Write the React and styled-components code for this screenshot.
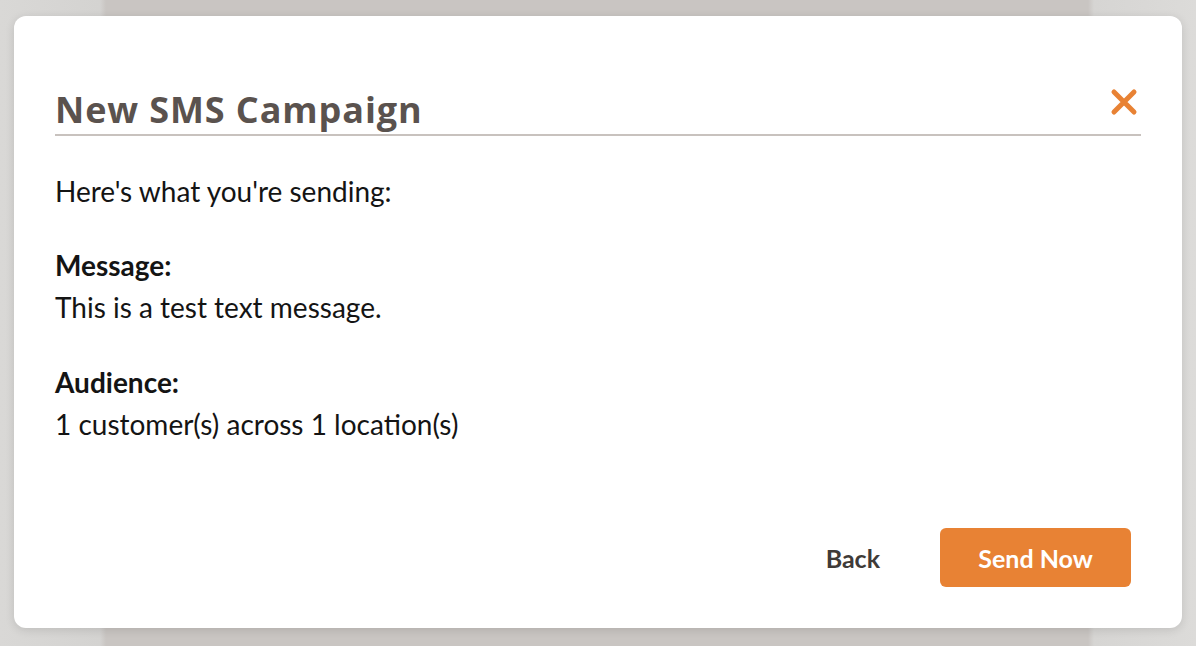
import React from 'react';
import styled, { createGlobalStyle } from 'styled-components';

const Global = createGlobalStyle`
html, body {
  margin: 0;
  padding: 0;
  width: 100%;
  height: 100%;
  overflow: hidden;
}
#root {
  height: 100%;
}
`

const Backdrop = styled.div`
width: 1196px;
height: 646px;
background: linear-gradient(90deg, #d9d8d6 0px, #d4d3d1 100px, #c9c5c2 106px, #c9c5c2 1088px, #d6d5d3 1094px, #dcdbd9 100%);
padding: 16px 14px 18px 14px;
box-sizing: border-box;
display: flex;
`

const Modal = styled.div`
flex: 1;
background-color: #ffffff;
border-radius: 12px;
box-shadow: 0 2px 10px rgba(0, 0, 0, 0.12);
padding: 71px 41px 41px 41px;
display: flex;
flex-direction: column;
`

const Header = styled.div`
display: flex;
align-items: flex-end;
justify-content: space-between;
border-bottom: 2px solid #c8c2be;
padding-bottom: 4px;
`

const Title = styled.h1`
margin: 0;
font-family: 'Open Sans', sans-serif;
font-weight: 700;
font-size: 36px;
line-height: 40px;
letter-spacing: 0.9px;
color: #5a524e;
`

const Close = styled.button`
border: none;
background: none;
padding: 0;
margin: 0 2px 13px 0;
width: 30px;
height: 30px;
display: flex;
align-items: center;
justify-content: center;
cursor: pointer;
`

const Body = styled.div`
flex: 1;
font-family: 'Lato', sans-serif;
font-size: 28px;
color: #141414;
padding-top: 38px;
`

const Intro = styled.p`
margin: 0 0 36px 0;
line-height: 34px;
`

const Section = styled.div`
margin-bottom: 33px;
`

const Label = styled.div`
font-weight: 700;
line-height: 42px;
`

const Value = styled.div`
line-height: 42px;
`

const Footer = styled.div`
display: flex;
justify-content: flex-end;
align-items: center;
gap: 56px;
padding-right: 10px;
`

const Button = styled.button`
font-family: 'Lato', sans-serif;
font-weight: 700;
font-size: 25px;
border: none;
border-radius: 6px;
height: 59px;
cursor: pointer;
background-color: ${p => p.primary ? '#e88234' : 'transparent'};
color: ${p => p.primary ? '#ffffff' : '#3f3b38'};
width: ${p => p.primary ? '191px' : 'auto'};
padding: ${p => p.primary ? '0' : '0 4px'};
`

function CloseIcon() {
    return (
        <svg width="30" height="30" viewBox="0 0 30 30">
            <path d="M5 5 L25 25 M25 5 L5 25" stroke="#e88234" strokeWidth="5" strokeLinecap="round" fill="none" />
        </svg>
    );
}

function App() {
    return (
        <Backdrop>
            <Global />
            <Modal>
                <Header>
                    <Title>New SMS Campaign</Title>
                    <Close><CloseIcon /></Close>
                </Header>
                <Body>
                    <Intro>Here's what you're sending:</Intro>
                    <Section>
                        <Label>Message:</Label>
                        <Value>This is a test text message.</Value>
                    </Section>
                    <Section>
                        <Label>Audience:</Label>
                        <Value>1 customer(s) across 1 location(s)</Value>
                    </Section>
                </Body>
                <Footer>
                    <Button>Back</Button>
                    <Button primary>Send Now</Button>
                </Footer>
            </Modal>
        </Backdrop>
    );
}

export default App
